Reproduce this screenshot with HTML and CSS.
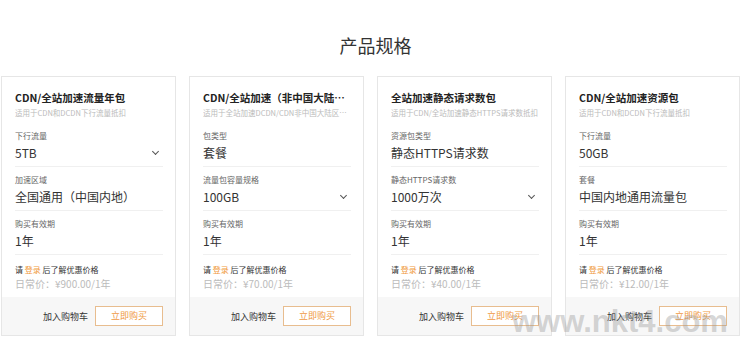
FILE: index.html
```html
<!DOCTYPE html>
<html lang="zh-CN">
<head>
<meta charset="utf-8">
<title>产品规格</title>
<link rel="stylesheet" href="styles.css">
</head>
<body>
<div class="page">
  <h1 class="heading">产品规格</h1>
  <div class="cards">
    <div class="card">
      <div class="body">
        <div class="name">CDN/全站加速流量年包</div>
        <div class="desc">适用于CDN和DCDN下行流量抵扣</div>
        <div class="field"><div class="label">下行流量</div><div class="value">5TB<span class="chev"></span></div></div>
        <div class="field"><div class="label">加速区域</div><div class="value">全国通用（中国内地）</div></div>
        <div class="field"><div class="label">购买有效期</div><div class="value">1年</div></div>
        <div class="price"><div class="login">请 <span class="link">登录</span> 后了解优惠价格</div><div class="amount">日常价：¥900.00/1年</div></div>
      </div>
      <div class="foot"><span class="cart">加入购物车</span><span class="buy">立即购买</span></div>
    </div>
    <div class="card">
      <div class="body">
        <div class="name">CDN/全站加速（非中国大陆区域）流量包</div>
        <div class="desc">适用于全站加速DCDN/CDN非中国大陆区域下行流量抵扣</div>
        <div class="field"><div class="label">包类型</div><div class="value">套餐</div></div>
        <div class="field"><div class="label">流量包容量规格</div><div class="value">100GB<span class="chev"></span></div></div>
        <div class="field"><div class="label">购买有效期</div><div class="value">1年</div></div>
        <div class="price"><div class="login">请 <span class="link">登录</span> 后了解优惠价格</div><div class="amount">日常价：¥70.00/1年</div></div>
      </div>
      <div class="foot"><span class="cart">加入购物车</span><span class="buy">立即购买</span></div>
    </div>
    <div class="card">
      <div class="body">
        <div class="name">全站加速静态请求数包</div>
        <div class="desc">适用于CDN/全站加速静态HTTPS请求数抵扣</div>
        <div class="field"><div class="label">资源包类型</div><div class="value">静态HTTPS请求数</div></div>
        <div class="field"><div class="label">静态HTTPS请求数</div><div class="value">1000万次<span class="chev"></span></div></div>
        <div class="field"><div class="label">购买有效期</div><div class="value">1年</div></div>
        <div class="price"><div class="login">请 <span class="link">登录</span> 后了解优惠价格</div><div class="amount">日常价：¥40.00/1年</div></div>
      </div>
      <div class="foot"><span class="cart">加入购物车</span><span class="buy">立即购买</span></div>
    </div>
    <div class="card">
      <div class="body">
        <div class="name">CDN/全站加速资源包</div>
        <div class="desc">适用于CDN和DCDN下行流量抵扣</div>
        <div class="field"><div class="label">下行流量</div><div class="value">50GB</div></div>
        <div class="field"><div class="label">套餐</div><div class="value">中国内地通用流量包</div></div>
        <div class="field"><div class="label">购买有效期</div><div class="value">1年</div></div>
        <div class="price"><div class="login">请 <span class="link">登录</span> 后了解优惠价格</div><div class="amount">日常价：¥12.00/1年</div></div>
      </div>
      <div class="foot"><span class="cart">加入购物车</span><span class="buy">立即购买</span></div>
    </div>
  </div>
  <div class="watermark">www.nkt4.com</div>
</div>
</body>
</html>
```
FILE: styles.css
```css
* { box-sizing: border-box; }
html, body { margin: 0; padding: 0; background: #fff; }
body {
  font-family: "Noto Sans CJK SC", "Noto Sans", "Liberation Sans", sans-serif;
  color: #333;
  width: 750px;
  height: 340px;
  overflow: hidden;
}
.page { position: relative; height: 340px; padding-left: 1px; }
.heading {
  margin: 0;
  height: 76px;
  padding-top: 31px;
  font-size: 18px;
  line-height: 28px;
  font-weight: normal;
  text-align: center;
  color: #333;
}
.cards { display: flex; gap: 13px; }
.card {
  width: 175px;
  height: 260px;
  border: 1px solid #e6e6e6;
  display: flex;
  flex-direction: column;
}
.body { padding: 13px 12px 0 13px; flex: 1; }
.name {
  font-size: 10.5px;
  line-height: 16px;
  font-weight: bold;
  color: #222;
  white-space: nowrap;
  overflow: hidden;
  text-overflow: ellipsis;
}
.desc {
  margin-top: 1px;
  font-size: 7.5px;
  line-height: 12px;
  color: #bbb;
  white-space: nowrap;
  overflow: hidden;
  text-overflow: ellipsis;
}
.field {
  margin-top: 4px;
  padding: 7px 0 2px;
  border-bottom: 1px solid #f0f0f0;
}
.field + .field { margin-top: 0; }
.label { font-size: 8px; line-height: 12px; color: #666; }
.value {
  display: flex;
  justify-content: space-between;
  align-items: center;
  font-size: 12px;
  line-height: 22px;
  color: #333;
}
.chev {
  width: 5px;
  height: 5px;
  border-right: 1px solid #555;
  border-bottom: 1px solid #555;
  transform: rotate(45deg);
  margin: -3px 5px 0 0;
}
.price { padding: 8px 0 6px; }
.login { font-size: 8px; line-height: 14px; color: #333; }
.link { color: #f09a3e; }
.amount { font-size: 10px; line-height: 14px; color: #bbb; }
.foot {
  height: 38px;
  background: #f7f7f7;
  display: flex;
  justify-content: flex-end;
  align-items: center;
  gap: 7px;
  padding-right: 12px;
}
.cart { font-size: 9px; color: #333; }
.buy {
  width: 68px;
  height: 20px;
  border: 1px solid #e8bd8f;
  background: #fff;
  color: #ef9a45;
  font-size: 9px;
  line-height: 18px;
  text-align: center;
}
.watermark {
  position: absolute;
  left: 512px;
  top: 302px;
  font-family: "Liberation Sans", sans-serif;
  font-weight: bold;
  font-size: 31px;
  line-height: 40px;
  color: rgba(150, 150, 150, 0.4);
  white-space: nowrap;
}
```
